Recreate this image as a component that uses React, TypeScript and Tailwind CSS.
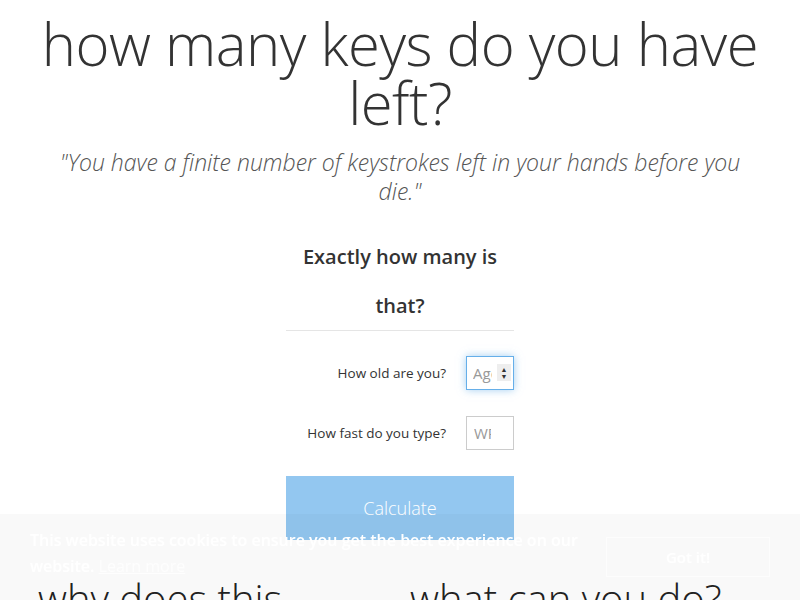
export default function App() {
  return (
    <div className="relative min-h-screen overflow-hidden bg-white text-[#333] [font-family:'Open_Sans',sans-serif]">
      <header className="px-8 pt-[14px] text-center">
        <h1 className="text-[58px] font-light leading-[59px] tracking-[-0.5px] text-[#333]">
          how many keys do you have left?
        </h1>
        <p className="mx-auto mt-[16px] max-w-[690px] text-[23px] font-light italic leading-[29px] text-[#555]">
          "You have a finite number of keystrokes left in your hands before you die."
        </p>
      </header>

      <main className="mx-auto mt-[26px] w-[228px]">
        <h2 className="border-b border-[#e5e5e5] text-center text-[20px] font-semibold leading-[49px] text-[#333]">
          Exactly how many is that?
        </h2>

        <form className="mt-[25px] flex flex-col gap-[26px] text-[13.5px]">
          <div className="flex items-center justify-end gap-[20px]">
            <label htmlFor="age" className="text-[#333]">How old are you?</label>
            <div className="relative">
              <input
                id="age"
                type="number"
                placeholder="Age"
                className="h-[34px] w-[48px] border border-[#66afe9] px-[6px] text-[15px] text-[#555] shadow-[0_0_8px_rgba(102,175,233,0.6)] outline-none placeholder:text-[#999]"
              />
              {/* spinner shown on the focused number field */}
              <span className="pointer-events-none absolute right-[3px] top-[8px] flex h-[17px] w-[14px] flex-col items-center justify-center bg-[#eee] text-[7px] leading-[7px] text-[#333]">
                <span>▲</span>
                <span>▼</span>
              </span>
            </div>
          </div>
          <div className="flex items-center justify-end gap-[20px]">
            <label htmlFor="wpm" className="text-[#333]">How fast do you type?</label>
            <input
              id="wpm"
              type="number"
              placeholder="WPM"
              className="h-[34px] w-[48px] border border-[#ccc] px-[7px] text-[15px] text-[#555] outline-none placeholder:text-[#999]"
            />
          </div>
          <button
            type="button"
            className="h-[64px] w-full bg-[#93c7f0] text-[18px] font-light text-white"
          >
            Calculate
          </button>
        </form>
      </main>

      <section className="mt-[34px] grid grid-cols-2 gap-[20px] px-[38px]">
        <h3 className="text-[40px] font-light leading-[50px] text-[#222]">why does this matter?</h3>
        <h3 className="text-[40px] font-light leading-[50px] text-[#222]">what can you do?</h3>
      </section>

      <div className="fixed inset-x-0 bottom-0 flex h-[86px] items-center justify-between bg-[#000]/[0.025] px-[30px] text-[16px] text-white">
        <p className="-mt-[8px] max-w-[570px] font-semibold leading-[26px]">
          This website uses cookies to ensure you get the best experience on our website.{' '}
          <a href="#" className="font-normal underline opacity-80">Learn more</a>
        </p>
        <button type="button" className="h-[40px] w-[164px] border border-white/60 text-[15px] font-semibold text-white">
          Got it!
        </button>
      </div>
    </div>
  )
}
